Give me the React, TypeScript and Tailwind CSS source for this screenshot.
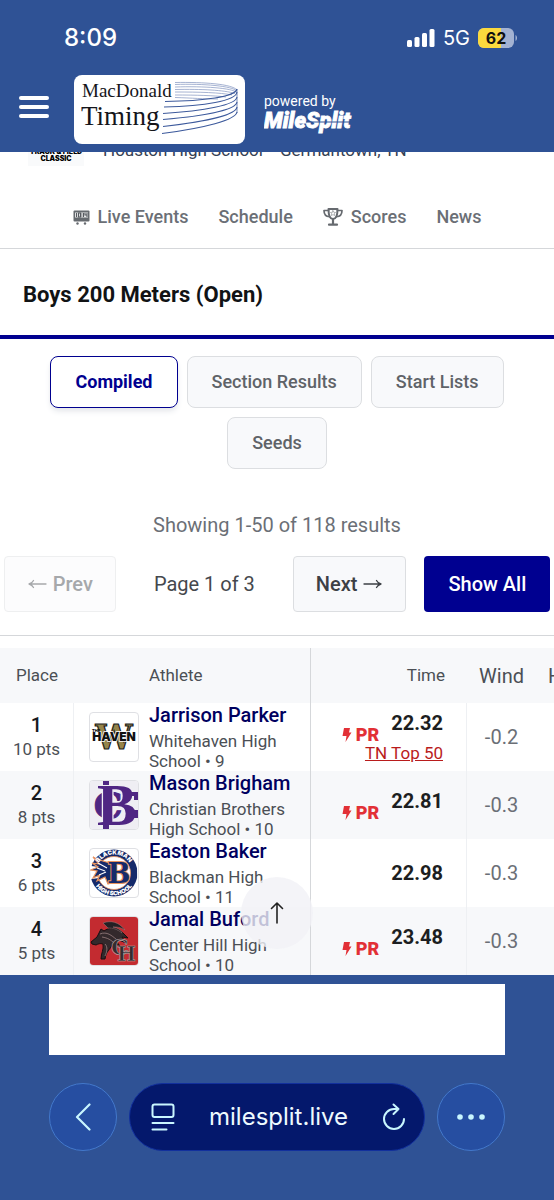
import React from 'react';

type Result = {
  place: number;
  points: number;
  name: string;
  school: string;
  grade: number;
  time: string;
  wind: string;
  pr: boolean;
  ranking?: string;
  logo: React.ReactNode;
};

const StatusBar = () => (
  <div className="flex h-[75px] items-center justify-between pl-16 pr-9 text-white">
    <span className="font-['Inter'] text-2xl font-medium">8:09</span>
    <div className="flex items-center gap-2">
      <svg width="28" height="18" viewBox="0 0 28 18" fill="currentColor" aria-label="Signal strength">
        <rect x="0" y="11" width="5" height="7" rx="1.5" />
        <rect x="7.5" y="8" width="5" height="10" rx="1.5" />
        <rect x="15" y="4" width="5" height="14" rx="1.5" />
        <rect x="22.5" y="0" width="5" height="18" rx="1.5" />
      </svg>
      <span className="font-['Inter'] text-xl leading-6">5G</span>
      <svg width="40" height="20" viewBox="0 0 40 20" aria-label="Battery">
        <defs>
          <clipPath id="battery">
            <rect width="36" height="20" rx="6" />
          </clipPath>
        </defs>
        <rect width="36" height="20" rx="6" fill="#a3b2d2" />
        <rect width="23" height="20" fill="#fbd93d" clipPath="url(#battery)" />
        <path d="M37.5 7v6c2-1 2-5 0-6z" fill="#a3b2d2" />
        <text x="18" y="16" textAnchor="middle" fontFamily="Inter, sans-serif" fontSize="16" fontWeight="700" fill="#111">62</text>
      </svg>
    </div>
  </div>
);

const TimingLogo = () => (
  <svg width="171" height="69" viewBox="0 0 171 69" className="rounded-lg bg-white" aria-label="MacDonald Timing">
    <g fontFamily="'Liberation Serif', serif" fill="#15151a">
      <text x="8" y="22" fontSize="19">MacDonald</text>
      <text x="7" y="50" fontSize="27">Timing</text>
    </g>
    <g fill="none" stroke="#8f9fc6" strokeWidth="0.8">
      <path d="M101 7.5C130 7 158 9 163 15" />
      <path d="M101 9.5C130 8.5 158 11 163 16" />
      <path d="M101 12C130 11 158 13 163 17.5" />
      <path d="M101 14.5C128 14 150 15 161 18.5" />
      <path d="M101 17C126 17 146 17.5 158 20" />
      <path d="M101 20C122 20 140 20.5 152 22" />
      <path d="M101 22.5C118 23 130 24 144 24" />
    </g>
    <g fill="none" stroke="#3d5a9c" strokeWidth="1.1">
      <path d="M91 26.5C130 26 161 22 163 14" />
      <path d="M90 32C130 31 162 26 163 17" />
      <path d="M89 38.5C130 36 162 30 163 22" />
      <path d="M89 44.5C130 41 162 35 163 27" />
      <path d="M89 51.5C130 47 162 40 163 32" />
      <path d="M88 58.5C130 53 162 45 163 37" />
      <path d="M163 14v24" strokeWidth="0.7" />
    </g>
  </svg>
);

const MileSplitLogo = () => (
  <svg width="94" height="26" viewBox="0 0 94 26" aria-label="MileSplit">
    <text x="0" y="19" fontFamily="Roboto, sans-serif" fontSize="22" fontStyle="italic" fontWeight="900" fill="#fff" stroke="#fff" strokeWidth="0.8">
      MileSplit
    </text>
    <path d="M42 13h50" stroke="#2f5295" strokeWidth="1" />
  </svg>
);

const Header = () => (
  <header className="bg-[#2f5295] text-white">
    <StatusBar />
    <div className="flex items-center pb-2 pl-[19px]">
      <button type="button" aria-label="Menu" className="flex w-[30px] flex-col gap-[5px] pb-1.5">
        <span className="h-1 rounded-full bg-white" />
        <span className="h-1 rounded-full bg-white" />
        <span className="h-1 rounded-full bg-white" />
      </button>
      <a href="#home" className="ml-[25px]">
        <TimingLogo />
      </a>
      <a href="#milesplit" className="ml-[19px] flex flex-col pt-2">
        <span className="text-sm leading-4">powered by</span>
        <MileSplitLogo />
      </a>
    </div>
  </header>
);

const ScoreboardIcon = () => (
  <svg width="17" height="15" viewBox="0 0 17 15" fill="#666a6f">
    <rect x="0.5" y="0.5" width="16" height="11" rx="1" />
    <rect x="2" y="2.5" width="13" height="5" fill="#e8e9ea" />
    <path d="M3.5 3v4M5.5 3h2v4h-2zM8.8 3.5v1M8.8 5.5v1M10.5 3v4M12 3v2h2M14 3v4" fill="none" stroke="#55595e" strokeWidth="1.1" />
    <circle cx="4.5" cy="13.5" r="1.2" />
    <circle cx="12" cy="13.5" r="1.2" />
  </svg>
);

const TrophyIcon = () => (
  <svg width="20" height="18" viewBox="0 0 20 18" fill="none" stroke="#666a6f" strokeWidth="2" strokeLinejoin="round" strokeLinecap="round">
    <path d="M5.5 1h9c0 6-1.5 10-4.500 10S5.500 7 5.500 1z" />
    <path d="M5.5 2.500H1c0 3.500 2 6 5.500 6.200M14.500 2.500H19c0 3.500-2 6-5.500 6.200" strokeWidth="1.700" />
    <path d="M10 11v5M6 16.700h8" strokeWidth="2.200" />
    <path d="M10 2.700l.8 1.600 1.700.2-1.200 1.200.3 1.800-1.600-.9-1.600.9.3-1.800-1.200-1.200 1.700-.2z" strokeWidth="0.500" />
  </svg>
);

const BoltIcon = () => (
  <svg width="10" height="14" viewBox="0 0 10 14" fill="#e23036">
    <path d="M2 0h6L7 4.500h2.500L3.500 14l1-6H0.500z" />
  </svg>
);

const Arrow = ({ className }: { className?: string }) => (
  <svg className={className} width="20" height="12" viewBox="0 0 20 12" fill="none" stroke="currentColor" strokeWidth="1.300" strokeLinecap="round" strokeLinejoin="round">
    <path d="M1 6h17M13.500 2.500c1 2 2.500 3 4.500 3.500-2 .5-3.500 1.500-4.500 3.500" />
  </svg>
);

const WhitehavenLogo = () => (
  <svg viewBox="0 0 48 48">
    <text x="24" y="36" textAnchor="middle" fontFamily="'DejaVu Serif', serif" fontWeight="700" fontSize="33" fill="#96854a" stroke="#1b1b1b" strokeWidth="1.200">W</text>
    <text x="24" y="28" textAnchor="middle" fontFamily="Inter, sans-serif" fontWeight="900" fontSize="12" fill="#111" stroke="#fff" strokeWidth="1.500" paintOrder="stroke">HAVEN</text>
    <text x="2" y="19" fontFamily="Inter, sans-serif" fontWeight="900" fontSize="4" fill="#111">THE</text>
  </svg>
);

const ChristianBrothersLogo = () => (
  <svg viewBox="0 0 48 48" className="bg-[#efeef3]">
    <g fontWeight="700" fill="#4f2683" textAnchor="middle">
      <text x="18" y="37" fontFamily="'DejaVu Serif', serif" fontSize="36" stroke="#4f2683" strokeWidth="1">C</text>
      <text x="27" y="44" fontFamily="'Liberation Serif', serif" fontSize="60" stroke="#efeef3" strokeWidth="2.500" paintOrder="stroke">B</text>
    </g>
    <path d="M36 13h10v6M36 35h10v-6M13 2h6M13 46h6" fill="none" stroke="#4f2683" strokeWidth="4" />
  </svg>
);

const BlackmanLogo = () => (
  <svg viewBox="0 0 48 48">
    <defs>
      <path id="arc-top" d="M5.500 24a18.500 18.500 0 0 1 37 0" />
      <path id="arc-bottom" d="M1.500 24a22.500 22.500 0 0 0 45 0" />
    </defs>
    <circle cx="24" cy="24" r="23.500" fill="#152a6b" />
    <path d="M1 17a24 24 0 0 0 0 13l9-1V18zM47 17a24 24 0 0 1 0 13" fill="#fff" />
    <circle cx="24" cy="24" r="16.500" fill="#fff" stroke="#e8935e" strokeWidth="0.800" />
    <path d="M3 8c5 3 10 4 17 6l5 5-1 14-6 2-3-7-8 4 3-6-7 3 4-7-6-1 7-3-6-4 7 1z" fill="#152a6b" stroke="#e8935e" strokeWidth="1.200" />
    <path d="M8 14l9 5M7 19l8 3M9 26l7-3" stroke="#fff" strokeWidth="1.100" />
    <text x="29" y="34" textAnchor="middle" fontFamily="'DejaVu Serif', serif" fontWeight="700" fontSize="27" fill="#152a6b" stroke="#e8935e" strokeWidth="2" paintOrder="stroke">B</text>
    <g fontFamily="Inter, sans-serif" fontWeight="900" fontSize="6" fill="#fff">
      <text textAnchor="middle">
        <textPath href="#arc-top" startOffset="50%">BLACKMAN</textPath>
      </text>
      <text textAnchor="middle">
        <textPath href="#arc-bottom" startOffset="50%">HIGH SCHOOL</textPath>
      </text>
    </g>
  </svg>
);

const CenterHillLogo = () => (
  <svg viewBox="0 0 48 48" className="bg-[#c32b30]">
    <path d="M1 25l6-5 4-8 3 2c5-4 13-3 18 1l6 6-6-1 4 6-7-3-3 1 4 5-6-3-2 2c-2 5-6 6-7 14h-4c0-6 3-9 2-15-3-1-5 0-7 1l-4-1z" fill="#33292c" stroke="#170f11" />
    <path d="M13 6c8-3 16-1 22 7-5-3-8-3-12-3 5 1 8 3 9 6-5-4-9-5-14-5z" fill="#242024" stroke="#9c8080" strokeWidth="0.500" />
    <path d="M10 17c7-3 12 2 16 5M12 20c6 1 9 3 12 6M15 27c3 3 2 8 0 12" fill="none" stroke="#a98d8d" strokeWidth="0.700" />
    <g fontFamily="'DejaVu Serif', serif" fontWeight="700" fill="#332c30" stroke="#bda8a8" strokeWidth="0.600">
      <text x="21" y="38" fontSize="22">C</text>
      <text x="27" y="44" fontSize="20">H</text>
    </g>
  </svg>
);

const results: Result[] = [
  { place: 1, points: 10, name: 'Jarrison Parker', school: 'Whitehaven High School', grade: 9, time: '22.32', wind: '-0.2', pr: true, ranking: 'TN Top 50', logo: <WhitehavenLogo /> },
  { place: 2, points: 8, name: 'Mason Brigham', school: 'Christian Brothers High School', grade: 10, time: '22.81', wind: '-0.3', pr: true, logo: <ChristianBrothersLogo /> },
  { place: 3, points: 6, name: 'Easton Baker', school: 'Blackman High School', grade: 11, time: '22.98', wind: '-0.3', pr: false, logo: <BlackmanLogo /> },
  { place: 4, points: 5, name: 'Jamal Buford', school: 'Center Hill High School', grade: 10, time: '23.48', wind: '-0.3', pr: true, logo: <CenterHillLogo /> },
];

const MeetBanner = () => (
  <div className="flex h-[14px] items-end overflow-hidden pl-7">
    <div className="w-14 whitespace-nowrap bg-gray-50 pb-1 text-center font-['Inter'] text-[7px] font-black leading-[7px] text-black">
      TRACK &amp; FIELD
      <br />
      CLASSIC
    </div>
    <p className="pb-1.5 pl-[19px] text-[17px] leading-5 text-gray-700">Houston High School&nbsp; · Germantown, TN</p>
  </div>
);

const MeetNav = () => (
  <nav className="flex h-[83px] items-center justify-center gap-[30px] border-b border-[#d5d7da] pt-5 text-lg font-medium text-[#6b6f76]">
    <a href="#live" className="flex items-center gap-2">
      <ScoreboardIcon />
      Live Events
    </a>
    <a href="#schedule">Schedule</a>
    <a href="#scores" className="flex items-center gap-2">
      <TrophyIcon />
      Scores
    </a>
    <a href="#news">News</a>
  </nav>
);

const ResultTabs = () => {
  const tabs = ['Compiled', 'Section Results', 'Start Lists', 'Seeds'];
  return (
    <div className="flex flex-wrap justify-center gap-[9px] px-10 pt-[17px] text-lg">
      {tabs.map((tab, i) => (
        <button
          key={tab}
          type="button"
          className={
            i === 0
              ? 'h-[52px] rounded-lg border border-[#00008f] bg-white px-6 font-bold text-[#00008f] shadow-md shadow-gray-200'
              : 'h-[52px] rounded-lg border border-[#dcdee1] bg-[#f8f9fb] px-6 font-medium text-[#5f6368]'
          }
        >
          {tab}
        </button>
      ))}
    </div>
  );
};

const Pagination = () => (
  <div className="whitespace-nowrap border-b border-[#d5d7da] px-1 pt-10 pb-[23px] text-xl">
    <p className="text-center leading-8 text-[#6b6f76]">Showing 1-50 of 118 results</p>
    <div className="flex items-center justify-center gap-[18px] pt-[15px]">
      <button type="button" disabled className="flex h-14 items-center gap-1.5 rounded border border-[#eeeff0] bg-[#fcfcfd] px-[22px] font-medium text-[#a6a8ab]">
        <Arrow className="rotate-180" />
        Prev
      </button>
      <span className="px-5 text-[#45484d]">Page 1 of 3</span>
      <button type="button" className="flex h-14 items-center gap-1.5 rounded border border-[#dcdee1] bg-[#f8f9fb] px-[22px] font-medium text-[#3c4045]">
        Next
        <Arrow />
      </button>
      <button type="button" className="h-14 rounded bg-[#000090] px-6 font-medium text-white">
        Show All
      </button>
    </div>
  </div>
);

const ResultRow = ({ row }: { row: Result }) => (
  <tr className="h-[68px] bg-white even:bg-[#f7f8fa]">
    <td className="border-r border-[#eef0f3] text-center">
      <div className="text-xl font-medium leading-6 text-[#17191c]">{row.place}</div>
      <div className="text-[17px] leading-6 text-[#4b4f55]">{row.points} pts</div>
    </td>
    <td className="border-r border-[#d5d7da] pl-[15px]">
      <div className="flex items-center gap-[10px]">
        <div className="size-[50px] shrink-0 overflow-hidden rounded border border-[#dfe0e4] bg-white">{row.logo}</div>
        <div className="w-[150px]">
          <a href="#athlete" className="block whitespace-nowrap pb-1 text-xl font-medium leading-6 text-[#00005f]">{row.name}</a>
          <div className="text-[17px] leading-5 text-[#4b4f55]">
            {row.school} • {row.grade}
          </div>
        </div>
      </div>
    </td>
    <td className="border-r border-[#eef0f3] pr-[23px]">
      <div className="flex items-start justify-end gap-3">
        {row.pr && (
          <span className="flex items-center gap-1 pt-4 text-lg font-black leading-4 text-[#e23036]">
            <BoltIcon />
            PR
          </span>
        )}
        <span className="text-xl font-bold leading-6 text-[#1c1e21]">{row.time}</span>
      </div>
      {row.ranking && (
        <a href="#rankings" className="block text-right text-[17px] leading-5 text-[#b91c1c] underline">
          {row.ranking}
        </a>
      )}
    </td>
    <td className="text-center text-xl text-[#6b6f76]">{row.wind}</td>
    <td />
  </tr>
);

const ResultsTable = () => (
  <div className="relative mt-3 overflow-hidden">
    <table className="w-full min-w-[616px] table-fixed border-separate border-spacing-0">
      <colgroup>
        <col className="w-[74px]" />
        <col className="w-[237px]" />
        <col className="w-[156px]" />
        <col className="w-[69px]" />
        <col className="w-[80px]" />
      </colgroup>
      <thead>
        <tr className="h-[55px] bg-[#f7f8fa] text-[17px] text-[#4b4f55]">
          <th className="font-normal">Place</th>
          <th className="border-r border-[#d5d7da] pl-[75px] text-left font-normal">Athlete</th>
          <th className="pr-[22px] text-right font-normal">Time</th>
          <th className="text-xl font-normal">Wind</th>
          <th className="pl-3 text-left text-xl font-normal">Heat</th>
        </tr>
      </thead>
      <tbody>
        {results.map((row) => (
          <ResultRow key={row.place} row={row} />
        ))}
      </tbody>
    </table>
    <button
      type="button"
      aria-label="Back to top"
      className="absolute bottom-[26px] left-1/2 flex size-[72px] -translate-x-1/2 items-center justify-center rounded-full bg-[#f1f1f6]/80 text-[#222]"
    >
      <svg width="16" height="24" viewBox="0 0 16 24" fill="none" stroke="currentColor" strokeWidth="1.600" strokeLinecap="round" strokeLinejoin="round">
        <path d="M8 22V2M2.500 7.500L8 2l5.500 5.500" />
      </svg>
    </button>
  </div>
);

const BrowserBar = () => (
  <footer className="flex-1 px-[49px] pt-[9px] pb-12">
    <div className="h-[71px] bg-white" />
    <div className="flex items-center gap-3 pt-7">
      <button type="button" aria-label="Back" className="flex size-[68px] shrink-0 items-center justify-center rounded-full border border-[#4378cb] bg-[#264ea1] text-[#c9f6ff]">
        <svg width="16" height="28" viewBox="0 0 16 28" fill="none" stroke="currentColor" strokeWidth="2.200" strokeLinecap="round" strokeLinejoin="round">
          <path d="M14.500 1.500L2 14l12.500 12.500" />
        </svg>
      </button>
      <div className="flex h-[68px] min-w-0 flex-1 items-center justify-between rounded-full border border-[#12309d] bg-[#04186c] pl-[21px] pr-[18px] text-[#c9f6ff]">
        <button type="button" aria-label="Page settings">
          <svg width="24" height="28" viewBox="0 0 24 28" fill="none" stroke="currentColor" strokeWidth="2" strokeLinecap="round">
            <rect x="1.500" y="1.500" width="21" height="12.500" rx="2" />
            <path d="M1.500 20h21M1.500 26.500h14" />
          </svg>
        </button>
        <span className="font-['Inter'] text-2xl leading-7 text-[#eefaff]">milesplit.live</span>
        <button type="button" aria-label="Reload">
          <svg width="24" height="28" viewBox="0 0 24 28" fill="none" stroke="currentColor" strokeWidth="2" strokeLinecap="round" strokeLinejoin="round">
            <path d="M22 16A10 10 0 1 1 12 6h4.500M11.500 1.500L16.500 6l-5 5" />
          </svg>
        </button>
      </div>
      <button type="button" aria-label="More" className="flex size-[68px] shrink-0 items-center justify-center rounded-full border border-[#4378cb] bg-[#264ea1] text-[#c9f6ff]">
        <svg width="28" height="6" viewBox="0 0 28 6" fill="currentColor">
          <circle cx="3" cy="3" r="2.800" />
          <circle cx="14" cy="3" r="2.800" />
          <circle cx="25" cy="3" r="2.800" />
        </svg>
      </button>
    </div>
  </footer>
);

export default function App() {
  return (
    <div className="flex min-h-screen flex-col overflow-hidden bg-[#2f5295] font-['Roboto',sans-serif]">
      <Header />
      <main className="bg-white">
        <MeetBanner />
        <MeetNav />
        <h1 className="border-b-4 border-[#000090] pt-8 pb-[26px] pl-[23px] text-[22px] font-bold leading-7 text-[#111315]">Boys 200 Meters (Open)</h1>
        <ResultTabs />
        <Pagination />
        <ResultsTable />
      </main>
      <BrowserBar />
    </div>
  );
}
